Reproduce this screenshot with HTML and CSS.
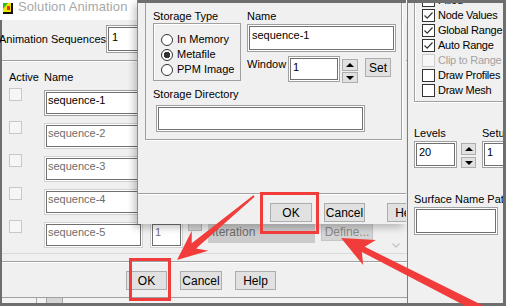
FILE: index.html
```html
<!DOCTYPE html>
<html lang="en">
<head>
    <meta charset="UTF-8">
    <title>Solution Animation</title>
    <link rel="stylesheet" href="styles.css">
</head>
<body>
<div class="screen">

    <!-- back dialog: Solution Animation -->
    <div class="win win-main">
        <div class="title">
            <svg class="app-icon" width="10" height="11" viewBox="0 0 10 11">
                <rect x="0" y="0" width="10" height="11" fill="#111"/>
                <rect x="0" y="0" width="8" height="9" fill="#f2e600"/>
                <polygon points="0,0 5,0 0,6" fill="#2fb52f"/>
                <rect x="4" y="3" width="3" height="4" fill="#e8332a"/>
            </svg>
            <span class="title-text">Solution Animation</span>
        </div>
        <div class="main-body">
            <div class="count-row">
                <span class="count-label">Animation Sequences</span>
                <div class="fld count-fld">1</div>
            </div>
            <div class="sep"></div>
            <div class="seq-head"><span class="head-active">Active</span><span>Name</span></div>
            <div class="seq-list">
                <div class="seq-row">
                    <span class="chk-off"></span>
                    <div class="fld seq-name on">sequence-1</div>
                </div>
                <div class="seq-row">
                    <span class="chk-off"></span>
                    <div class="fld seq-name">sequence-2</div>
                </div>
                <div class="seq-row">
                    <span class="chk-off"></span>
                    <div class="fld seq-name">sequence-3</div>
                </div>
                <div class="seq-row">
                    <span class="chk-off"></span>
                    <div class="fld seq-name">sequence-4</div>
                </div>
                <div class="seq-row">
                    <span class="chk-off"></span>
                    <div class="fld seq-name">sequence-5</div>
                    <div class="fld seq-every">1</div>
                    <span class="mini-spin"></span>
                    <div class="seq-when">Iteration</div>
                    <div class="btn btn-off">Define...</div>
                    <svg class="chev" width="8" height="5" viewBox="0 0 8 5"><polyline points="0.5,0.5 4,4 7.5,0.5" fill="none" stroke="#c4c4c4" stroke-width="1.3"/></svg>
                </div>
            </div>
            <div class="line-a"></div>
            <div class="line-b"></div>
            <div class="main-btns">
                <div class="btn btn-ok">OK</div>
                <div class="btn btn-cancel">Cancel</div>
                <div class="btn btn-help">Help</div>
            </div>
            <div class="strip">
                <span class="strip-cell c1"></span>
                <span class="strip-cell c2"></span>
                <span class="strip-cell c3"></span>
                <span class="strip-cell c4"></span>
            </div>
        </div>
    </div>

    <!-- front dialog: Animation Sequence -->
    <div class="win win-seq">
        <div class="panel">
            <div class="panel-grid">
                <div class="storage-col">
                    <div class="lbl">Storage Type</div>
                    <div class="group">
                        <div class="radio-row"><span class="radio"></span><span>In Memory</span></div>
                        <div class="radio-row"><span class="radio checked"></span><span>Metafile</span></div>
                        <div class="radio-row"><span class="radio"></span><span>PPM Image</span></div>
                    </div>
                </div>
                <div class="name-col">
                    <div class="lbl">Name</div>
                    <div class="fld name-fld">sequence-1</div>
                    <div class="window-row">
                        <span class="window-lbl">Window</span>
                        <div class="fld window-fld">1</div>
                        <div class="spin">
                            <span class="spin-up"></span>
                            <span class="spin-dn"></span>
                        </div>
                        <div class="btn btn-set">Set</div>
                    </div>
                </div>
            </div>
            <div class="lbl dir-lbl">Storage Directory</div>
            <div class="fld dir-fld"></div>
        </div>
        <div class="sep sep-seq"></div>
        <div class="seq-btns">
            <div class="btn b-ok">OK</div>
            <div class="btn b-cancel">Cancel</div>
            <div class="btn b-help">Help</div>
        </div>
    </div>

    <!-- right dialog: contour options -->
    <div class="win win-side">
        <div class="opt-group">
            <div class="opt"><span class="box"></span><span>Filled</span></div>
            <div class="opt"><span class="box on"></span><span>Node Values</span></div>
            <div class="opt"><span class="box on"></span><span>Global Range</span></div>
            <div class="opt"><span class="box on"></span><span>Auto Range</span></div>
            <div class="opt off"><span class="box"></span><span>Clip to Range</span></div>
            <div class="opt"><span class="box"></span><span>Draw Profiles</span></div>
            <div class="opt"><span class="box"></span><span>Draw Mesh</span></div>
        </div>
        <div class="levels">
            <div class="levels-col">
                <div class="lbl">Levels</div>
                <div class="levels-row">
                    <div class="fld levels-fld">20</div>
                    <div class="spin side-spin">
                        <span class="spin-up"></span>
                        <span class="spin-dn"></span>
                    </div>
                </div>
            </div>
            <div class="setup-col">
                <div class="lbl">Setup</div>
                <div class="levels-row">
                    <div class="fld setup-fld">1</div>
                </div>
            </div>
        </div>
        <div class="lbl surf-lbl">Surface Name Pattern</div>
        <div class="fld surf-fld"></div>
    </div>

    <!-- annotations -->
    <div class="mark mark-a"></div>
    <div class="mark mark-b"></div>
    <svg class="arrows" width="506" height="306" viewBox="0 0 506 306">
        <polygon points="177,260 208.4,250.8 196.1,248.6 254.6,196.8 253.4,195.2 191.7,243.2 191.8,230.8" fill="#f23b3b"/>
        <polygon points="341,238 375.9,240 364.7,246.7 508,318 504,326 361.9,252 363.1,265" fill="#f23b3b"/>
    </svg>
</div>
</body>
</html>
```

FILE: styles.css
```css
body {
    margin: 0;
    font-family: "Liberation Sans", Arial, sans-serif;
    font-size: 11px;
    color: #000;
    background: #6e6e6e;
}

.screen {
    position: relative;
    width: 506px;
    height: 306px;
    overflow: hidden;
    background: #6e6e6e;
}

/* windows sit on a free canvas, so they are placed by coordinates */
.win {
    position: absolute;
    box-sizing: border-box;
    background: #f0f0f0;
    overflow: hidden;
}

.lbl {
    line-height: 13px;
    white-space: nowrap;
}

/* text fields with the double motif border */
.fld {
    box-sizing: border-box;
    flex: none;
    background: #fff;
    border: 1px solid #a0a0a0;
    box-shadow: inset 0 0 0 1px #fff, inset 0 0 0 2px #707070;
    padding: 4px 0 0 4px;
    line-height: 13px;
    white-space: nowrap;
    overflow: hidden;
}

.btn {
    box-sizing: border-box;
    flex: none;
    height: 19px;
    display: flex;
    align-items: center;
    justify-content: center;
    background: #e1e1e1;
    border: 1px solid #adadad;
    font-size: 12px;
    white-space: nowrap;
}

.sep {
    flex: none;
    border-top: 1px solid #a0a0a0;
    border-bottom: 1px solid #fff;
}

.spin {
    display: flex;
    flex-direction: column;
    flex: none;
}

.spin-up, .spin-dn {
    box-sizing: border-box;
    display: flex;
    align-items: center;
    justify-content: center;
    background: #e1e1e1;
    border: 1px solid #adadad;
}

.spin-up::after {
    content: "";
    border-left: 4px solid transparent;
    border-right: 4px solid transparent;
    border-bottom: 4px solid #000;
}

.spin-dn::after {
    content: "";
    border-left: 4px solid transparent;
    border-right: 4px solid transparent;
    border-top: 4px solid #000;
}

/* ---- Solution Animation ---- */
.win-main {
    left: 0;
    top: 0;
    width: 407px;
    height: 303px;
    display: flex;
    flex-direction: column;
}

.title {
    flex: none;
    height: 20px;
    background: #fff;
    display: flex;
    align-items: flex-start;
    padding-left: 3px;
}

.app-icon {
    margin-top: 3px;
}

.title-text {
    margin-left: 5px;
    font-size: 13px;
    line-height: 14px;
    color: #a8a8a8;
    letter-spacing: 0.1px;
}

.main-body {
    flex: 1;
    display: flex;
    flex-direction: column;
    border-left: 2px solid #6e6e6e;
}

.count-row {
    flex: none;
    display: flex;
    align-items: center;
    height: 28px;
    margin-top: 5px;
}

.count-label {
    flex: 0 0 106px;
    margin-left: -3px;
    line-height: 13px;
    white-space: nowrap;
}

.count-fld {
    width: 60px;
    height: 28px;
    padding-top: 5px;
    padding-left: 5px;
}

.main-body > .sep {
    margin-top: 7px;
}

.seq-head {
    flex: none;
    display: flex;
    margin-top: 9px;
    padding-left: 7px;
    line-height: 13px;
}

.head-active {
    width: 35px;
}

.seq-list {
    flex: none;
    display: flex;
    flex-direction: column;
    margin-top: 4px;
}

.seq-row {
    flex: none;
    height: 33px;
    display: flex;
    align-items: flex-start;
}

.chk-off {
    flex: none;
    box-sizing: border-box;
    width: 13px;
    height: 13px;
    margin-left: 7px;
    border: 1px solid #c8c8c8;
    background: #f6f6f6;
}

.seq-name {
    width: 99px;
    height: 26px;
    margin: 2px 0 0 22px;
    padding: 3px 0 0 3px;
    color: #6d6d6d;
    border-color: #d2d2d2;
}

.seq-name.on {
    color: #000;
    border-color: #a0a0a0;
}

.seq-every {
    width: 33px;
    height: 26px;
    margin: 2px 0 0 7px;
    padding: 3px 0 0 4px;
    color: #6d6d6d;
    border-color: #d2d2d2;
}

.mini-spin {
    flex: none;
    box-sizing: border-box;
    width: 14px;
    height: 11px;
    margin-left: 5px;
    background: #d4d4d4;
    border: 1px solid #b4b4b4;
    display: flex;
    justify-content: center;
}

.mini-spin::after {
    content: "";
    width: 7px;
    height: 2px;
    margin-top: 1px;
    background: #555;
}

.seq-when {
    flex: none;
    box-sizing: border-box;
    width: 107px;
    height: 23px;
    margin-left: 6px;
    padding: 5px 0 0 4px;
    background: #cbcbcb;
    color: #6b6b6b;
    font-size: 12px;
    line-height: 14px;
}

.btn-off {
    width: 52px;
    height: 19px;
    margin: 2px 0 0 6px;
    background: #d4d4d4;
    border-color: #c6c6c6;
    color: #8a8a8a;
}

.chev {
    flex: none;
    margin: 23px 0 0 19px;
}

.line-a {
    flex: none;
    border-top: 1px solid #dadada;
}

.line-b {
    flex: none;
    margin-top: 7px;
    border-top: 1px solid #a0a0a0;
    border-bottom: 1px solid #fff;
}

.main-btns {
    flex: none;
    display: flex;
    gap: 13px;
    margin-top: 8px;
    padding-left: 124px;
}

.btn-ok { width: 41px; }
.btn-cancel { width: 42px; }
.btn-help { width: 41px; }

.strip {
    flex: 1;
    margin-top: 7px;
    display: flex;
    border-top: 1px solid #a0a0a0;
    background: #f3f3f3;
}

.strip-cell {
    box-sizing: border-box;
}

.strip-cell.c1 { width: 35px; border-right: 1px solid #a8a8a8; }
.strip-cell.c2 { width: 10px; border-right: 1px solid #a8a8a8; }
.strip-cell.c3 { width: 16px; background: #d5d5d5; border-right: 1px solid #a8a8a8; }
.strip-cell.c4 { flex: 1; }

/* ---- Animation Sequence (front) ---- */
.win-seq {
    left: 137px;
    top: 0;
    width: 269px;
    height: 224px;
    border-top: 3px solid #6e6e6e;
    border-left: 1px solid #8c8c8c;
    box-shadow: -3px 4px 7px rgba(0, 0, 0, 0.22);
    display: flex;
    flex-direction: column;
}

.panel {
    flex: none;
    box-sizing: border-box;
    width: 257px;
    margin-left: 7px;
    padding: 7px 0 7px 7px;
    border: 1px solid #a0a0a0;
    border-top: 0;
    box-shadow: 1px 1px 0 #fff;
}

.panel-grid {
    display: flex;
    gap: 6px;
}

.storage-col {
    width: 88px;
}

.group {
    box-sizing: border-box;
    height: 58px;
    padding: 8px 0 0 7px;
    border: 1px solid #a0a0a0;
    box-shadow: inset 1px 1px 0 #fff;
}

.radio-row {
    display: flex;
    align-items: center;
    gap: 4px;
    height: 15px;
    line-height: 13px;
    white-space: nowrap;
}

.radio {
    flex: none;
    box-sizing: border-box;
    width: 12px;
    height: 12px;
    border: 1px solid #333;
    border-radius: 50%;
    background: #fff;
}

.radio.checked {
    background: radial-gradient(circle, #333 0, #333 3px, #fff 3.5px);
}

.name-col {
    width: 149px;
}

.name-fld {
    width: 149px;
    height: 28px;
    margin-top: 1px;
}

.window-row {
    display: flex;
    align-items: flex-start;
    margin-top: 4px;
}

.window-lbl {
    flex: none;
    width: 41px;
    margin-top: 2px;
    line-height: 13px;
}

.window-fld {
    width: 52px;
    height: 26px;
}

.window-row .spin {
    width: 16px;
    margin: 3px 0 0 2px;
    gap: 1px;
}

.window-row .spin-up { height: 12px; }
.window-row .spin-dn { height: 11px; }

.btn-set {
    width: 26px;
    margin: 2px 0 0 7px;
}

.dir-lbl {
    margin-top: 5px;
}

.dir-fld {
    width: 209px;
    height: 27px;
    margin: 4px 0 0 3px;
}

.sep-seq {
    margin-top: 53px;
}

.seq-btns {
    flex: none;
    display: flex;
    margin-top: 8px;
    padding-left: 132px;
}

.b-ok { width: 42px; }
.b-cancel { width: 41px; margin-left: 12px; }
.b-help { width: 41px; margin-left: 22px; }

/* ---- right dialog ---- */
.win-side {
    left: 407px;
    top: 0;
    width: 99px;
    height: 303px;
    border-top: 3px solid #6e6e6e;
    border-right: 3px solid #6e6e6e;
    border-left: 1px solid #3f8fdf;
}

.opt-group {
    box-sizing: border-box;
    width: 120px;
    margin: -9px 0 0 6px;
    padding: 0 0 2px 7px;
    border-left: 1px solid #a0a0a0;
    border-bottom: 1px solid #a0a0a0;
    box-shadow: inset 1px 0 0 #fff, 0 1px 0 #fff;
}

.opt {
    display: flex;
    align-items: flex-start;
    height: 15px;
    line-height: 13px;
    letter-spacing: -0.25px;
    white-space: nowrap;
}

.opt .box {
    flex: none;
    box-sizing: border-box;
    width: 13px;
    height: 13px;
    margin-right: 3px;
    border: 1px solid #333;
    background: #fff;
}

.opt .box.on {
    background: #fff url("data:image/svg+xml;utf8,<svg xmlns='http://www.w3.org/2000/svg' width='11' height='11'><polyline points='1.5,5.5 4.2,8.2 9.5,2.5' fill='none' stroke='%23333' stroke-width='1.2'/></svg>") no-repeat center;
}

.opt.off {
    color: #a3a3a3;
}

.opt.off .box {
    border-color: #cccccc;
    background: #f7f7f7;
}

.levels {
    display: flex;
    margin: 25px 0 0 6px;
}

.levels-col {
    flex: none;
    width: 68px;
}

.levels-row {
    display: flex;
    align-items: flex-start;
    margin-top: 1px;
}

.levels-fld {
    width: 43px;
    height: 27px;
}

.side-spin {
    width: 15px;
    margin: 2px 0 0 4px;
    gap: 2px;
}

.side-spin .spin-up { height: 12px; }
.side-spin .spin-dn { height: 11px; }

.setup-fld {
    width: 40px;
    height: 27px;
}

.surf-lbl {
    margin: 25px 0 0 6px;
}

.surf-fld {
    width: 84px;
    height: 28px;
    margin: 1px 0 0 6px;
}

/* ---- annotations drawn over the shot ---- */
.mark {
    position: absolute;
    box-sizing: border-box;
    border: 3px solid #f23b3b;
}

.mark-a {
    left: 260px;
    top: 192px;
    width: 59px;
    height: 42px;
}

.mark-b {
    left: 129px;
    top: 258px;
    width: 42px;
    height: 43px;
}

.arrows {
    position: absolute;
    left: 0;
    top: 0;
    pointer-events: none;
}
```
